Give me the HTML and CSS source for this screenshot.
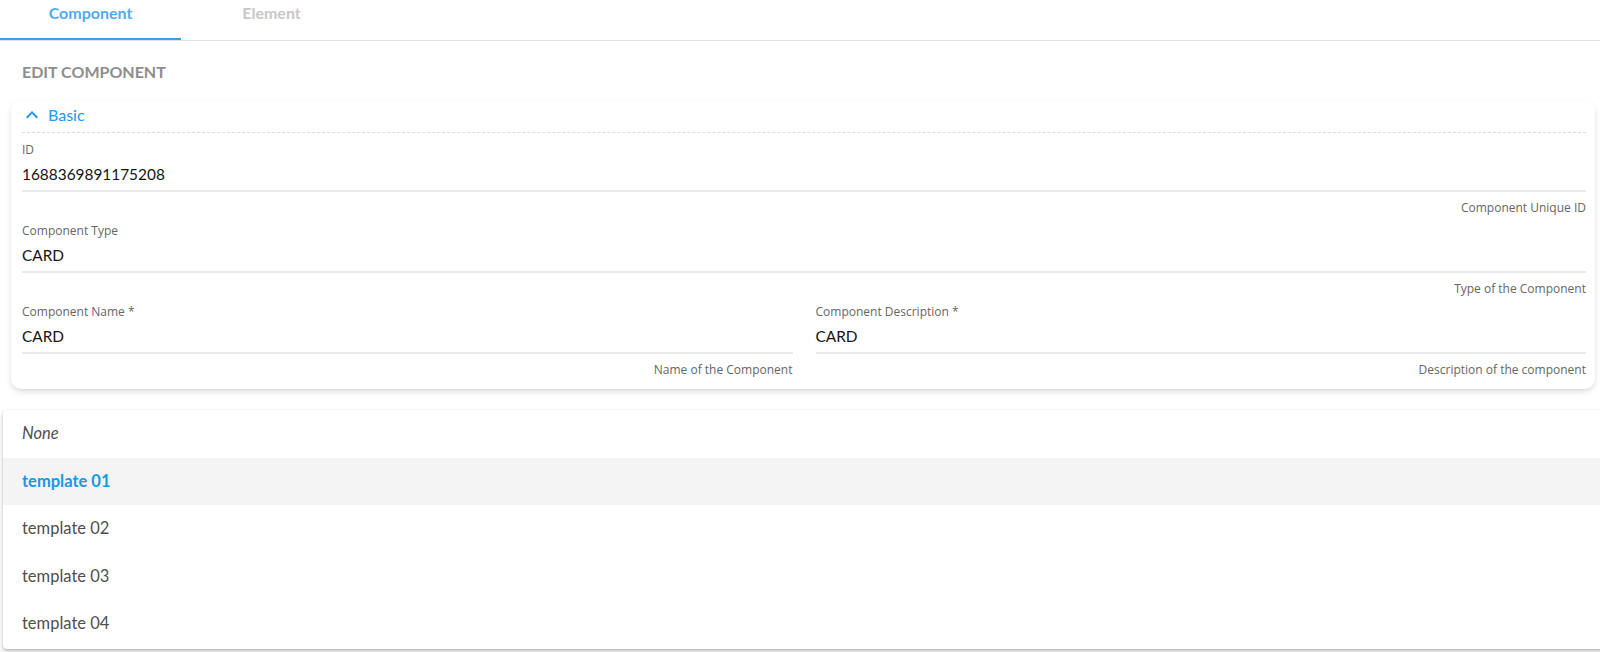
FILE: index.html
```html
<!DOCTYPE html>
<html>
<head>
<meta charset="utf-8">
<link rel="stylesheet" href="styles.css">
</head>
<body>
<div class="tabs">
  <div class="tab active">Component</div>
  <div class="tab">Element</div>
</div>
<div class="page">
  <h2 class="title">EDIT COMPONENT</h2>
  <section class="card">
    <div class="card-head">
      <svg class="chev" viewBox="0 0 24 24" width="24" height="24"><path d="M7.41 15.41L12 10.83l4.59 4.58L18 14l-6-6-6 6z" fill="currentColor"/></svg>
      <span>Basic</span>
    </div>
    <div class="fields">
      <div class="field">
        <div class="label">ID</div>
        <div class="value">1688369891175208</div>
        <div class="line"></div>
        <div class="helper">Component Unique ID</div>
      </div>
      <div class="field">
        <div class="label">Component Type</div>
        <div class="value">CARD</div>
        <div class="line"></div>
        <div class="helper">Type of the Component</div>
      </div>
      <div class="row">
        <div class="field">
          <div class="label">Component Name *</div>
          <div class="value">CARD</div>
          <div class="line"></div>
          <div class="helper">Name of the Component</div>
        </div>
        <div class="field">
          <div class="label">Component Description *</div>
          <div class="value">CARD</div>
          <div class="line"></div>
          <div class="helper">Description of the component</div>
        </div>
      </div>
    </div>
  </section>
</div>
<ul class="menu">
  <li class="item none">None</li>
  <li class="item selected">template 01</li>
  <li class="item">template 02</li>
  <li class="item">template 03</li>
  <li class="item">template 04</li>
</ul>
</body>
</html>
```
FILE: styles.css
```css
html, body {
  margin: 0;
  padding: 0;
  overflow: hidden;
  background: #fff;
}
body {
  position: relative;
  height: 652px;
  font-family: Lato, "Open Sans", sans-serif;
  color: #222;
}
.tabs {
  display: flex;
  height: 40px;
  border-bottom: 1px solid #e2e2e2;
}
.tab {
  width: 181px;
  text-align: center;
  font-size: 16px;
  font-weight: 700;
  line-height: 26px;
  color: #c8c8c8;
}
.tab.active {
  color: #52abec;
  box-shadow: inset 0 -2px 0 #3a9fe8;
}
.page {
  padding: 0 5px 0 11px;
}
.title {
  margin: 21px 0 18px 11px;
  font-size: 16px;
  line-height: 20px;
  font-weight: 700;
  color: #8e8e8e;
}
.card {
  background: #fff;
  border-radius: 10px;
  box-shadow: 0 3px 6px -1px rgba(0,0,0,0.16), 0 1px 2px -1px rgba(0,0,0,0.08);
  padding: 0 9px 11px 11px;
}
.card-head {
  display: flex;
  align-items: center;
  height: 29px;
  padding-bottom: 3px;
  border-bottom: 1px dashed #dcdcdc;
  color: #2196f3;
  font-size: 16px;
}
.chev {
  margin-left: -2px;
  margin-right: 4px;
}
.fields {
  padding-top: 9px;
}
.field {
  padding-bottom: 7px;
}
.label {
  font-family: "Open Sans", "Noto Sans", sans-serif;
  font-size: 12px;
  line-height: 16px;
  color: #666;
}
.value {
  margin-top: 5px;
  font-size: 15.4px;
  line-height: 22px;
  color: #151515;
}
.line {
  margin-top: 5px;
  height: 2px;
  background: #e9e9e9;
}
.helper {
  margin-top: 8px;
  font-family: "Open Sans", "Noto Sans", sans-serif;
  font-size: 12px;
  line-height: 16px;
  color: #666;
  text-align: right;
}
.row {
  display: grid;
  grid-template-columns: 1fr 1fr;
  column-gap: 23px;
}
.row .field {
  padding-bottom: 0;
}
.menu {
  position: absolute;
  top: 410px;
  left: 3px;
  right: -12px;
  margin: 0;
  padding: 0 0 1px;
  list-style: none;
  background: #fff;
  border-radius: 4px;
  box-shadow: 0 3px 5px rgba(0,0,0,0.2), 0 1px 2px rgba(0,0,0,0.12), 0 0 1px rgba(0,0,0,0.1);
}
.item {
  height: 47.5px;
  line-height: 47.5px;
  padding-left: 19px;
  font-size: 16.5px;
  color: #4f4f4f;
}
.item.none {
  font-style: italic;
}
.item.selected {
  background: #f4f4f4;
  color: #1a96e8;
  font-weight: 700;
}
```
